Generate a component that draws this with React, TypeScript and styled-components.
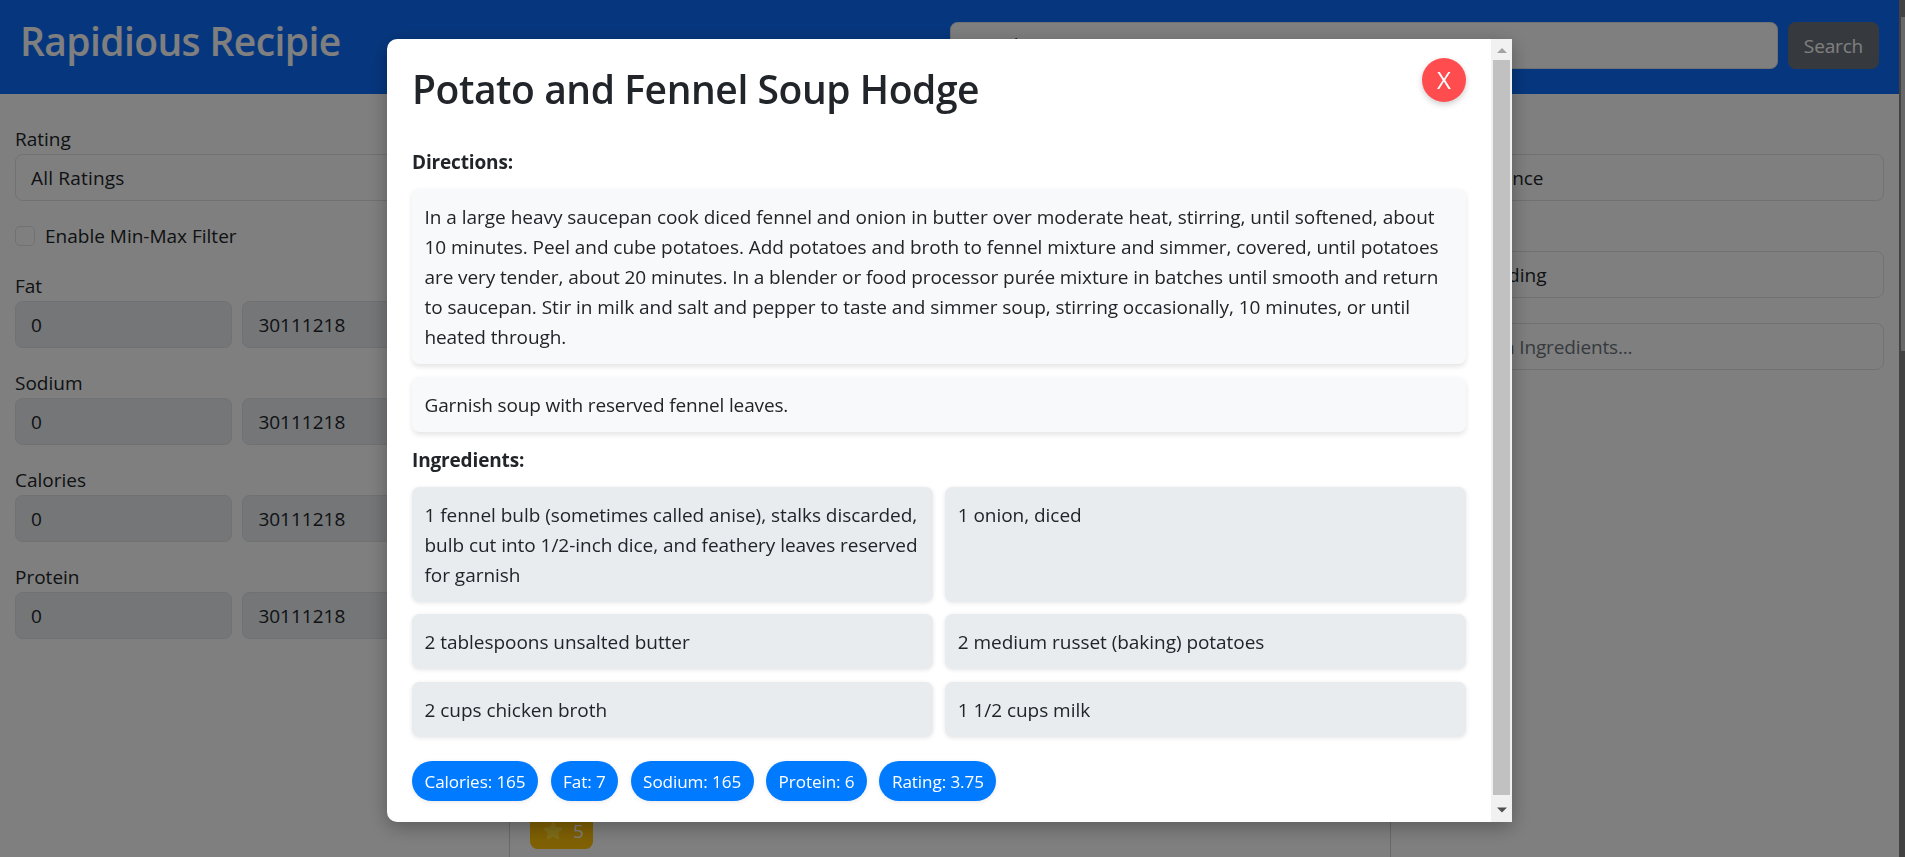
import React from "react";
import styled, { createGlobalStyle } from "styled-components";

const GlobalStyle = createGlobalStyle`
  *, *::before, *::after { box-sizing: border-box; }
  body {
    margin: 0;
    background: #fff;
    color: #212529;
    font-family: "Open Sans", "Noto Sans", sans-serif;
    font-size: 19px;
    line-height: 30px;
  }
  h1, h2, p { margin: 0; }
  input, select, button { font: inherit; color: inherit; }
`;

const Viewport = styled.div`
  display: flex;
  width: 100%;
  height: 857px;
  overflow: hidden;
`;

const Page = styled.div`
  display: flex;
  flex-direction: column;
  flex: 1;
  min-width: 0;
`;

const Header = styled.header`
  display: flex;
  align-items: flex-start;
  justify-content: space-between;
  height: 94px;
  flex: none;
  padding: 17px 20px 0;
  background: #0d6efd;
`;

const Brand = styled.h1`
  font-size: 39px;
  font-weight: 600;
  line-height: 48px;
  letter-spacing: -0.6px;
  color: #fff;
`;

const SearchForm = styled.form`
  display: flex;
  gap: 10px;
  margin-top: 5px;
`;

const Field = styled.div<{ $disabled?: boolean; $muted?: boolean; $tracking?: number }>`
  flex: 1;
  min-width: 0;
  height: 47px;
  padding: 8px 15px 7px;
  border: 1px solid #dee2e6;
  border-radius: 7.5px;
  background: ${(p) => (p.$disabled ? "#e9ecef" : "#fff")};
  color: ${(p) => (p.$muted ? "#6c757d" : "#212529")};
  letter-spacing: ${(p) => p.$tracking ?? (p.$disabled ? 0 : -0.15)}px;
  white-space: nowrap;
`;

const SearchField = styled(Field)`
  flex: none;
  width: 828px;
  padding-top: 7px;
`;

const SearchButton = styled.button`
  width: 91px;
  height: 47px;
  padding: 0;
  border: 0;
  border-radius: 7.5px;
  background: #6c757d;
  color: #fff;
  letter-spacing: -0.15px;
`;

const Columns = styled.div`
  display: grid;
  grid-template-columns: 1fr 2fr 1fr;
  flex: 1;
  min-height: 0;
  padding-top: 30px;
`;

const FilterColumn = styled.div`
  padding: 0 15px;
  min-width: 0;
`;

const FilterGroup = styled.div`
  margin-bottom: 20px;
`;

const Label = styled.div`
  height: 30px;
`;

const Pair = styled.div`
  display: flex;
  gap: 10px;
`;

const CheckRow = styled.label`
  display: flex;
  align-items: center;
  gap: 10px;
  height: 30px;
  margin-bottom: 20px;
`;

const CheckBox = styled.span`
  width: 20px;
  height: 20px;
  border: 1px solid #dee2e6;
  border-radius: 5px;
`;

const LooseField = styled(Field)`
  margin-top: 25px;
`;

const ResultCard = styled.article`
  display: flex;
  flex-direction: column;
  align-items: flex-start;
  height: 1000px;
  margin: 30px 33px 0 34px;
  padding: 658px 20px 0;
  border: 1px solid #d2d2d2;
  border-radius: 7.5px;
`;

const StarBadge = styled.span`
  display: flex;
  align-items: center;
  justify-content: space-between;
  width: 63px;
  height: 37px;
  margin-top: -1px;
  padding: 0 9px 0 12px;
  border-radius: 7.5px;
  background: #ffc107;
  color: #fff;
`;

const PageScroll = styled.div`
  width: 6px;
  padding: 17px 0 0 2px;
  background: #424242;
  position: relative;
  z-index: 3;
`;

const PageThumb = styled.div`
  height: 334px;
  background: #686868;
`;

const Overlay = styled.div`
  position: fixed;
  inset: 0;
  z-index: 2;
  display: flex;
  align-items: flex-start;
  padding: 39px 0 0 387px;
  background: rgba(0, 0, 0, 0.5);
`;

const Modal = styled.section`
  display: flex;
  width: 1125px;
  height: 783px;
  overflow: hidden;
  border-radius: 10px 0 0 10px;
  background: #fff;
  box-shadow: 0 5px 19px rgba(0, 0, 0, 0.3);
`;

const ModalBody = styled.div`
  flex: 1;
  min-width: 0;
  padding: 25px 25px 20px;
`;

const ModalHead = styled.div`
  display: flex;
  justify-content: space-between;
  align-items: flex-start;
  height: 82.5px;
`;

const ModalTitle = styled.h2`
  margin-top: 1px;
  font-size: 39px;
  font-weight: 600;
  line-height: 48px;
  letter-spacing: -0.43px;
`;

const CloseButton = styled.button`
  width: 44px;
  height: 44px;
  margin-top: -6px;
  padding: 0;
  border: 0;
  border-radius: 50%;
  background: #ff4d4f;
  color: #fff;
  font-size: 24px;
  line-height: 44px;
  box-shadow: 0 2.5px 6px rgba(0, 0, 0, 0.2);
`;

const SectionTitle = styled.div`
  height: 30px;
  margin-bottom: 12.5px;
  padding-top: 0.6px;
  font-weight: 700;
  letter-spacing: -0.15px;
`;

const Steps = styled.div`
  display: flex;
  flex-direction: column;
  gap: 12.5px;
  margin-bottom: 12.5px;
`;

const Step = styled.p`
  padding: 13px 12.5px 12px;
  border-radius: 7.5px;
  background: #f8f9fa;
  box-shadow: 0 2.5px 5px rgba(0, 0, 0, 0.1);
  white-space: nowrap;
`;

const Line = styled.span<{ $tracking: number }>`
  display: block;
  letter-spacing: ${(p) => p.$tracking}px;
`;

const Ingredients = styled.div`
  display: grid;
  grid-template-columns: 1fr 1fr;
  gap: 12.5px;
`;

const Ingredient = styled.div`
  padding: 13px 12.5px 12px;
  border-radius: 7.5px;
  background: #e9ecef;
  letter-spacing: -0.04px;
  box-shadow: 0 1px 4px rgba(0, 0, 0, 0.1);
`;

const Pills = styled.div`
  display: flex;
  gap: 12.5px;
  margin-top: 24.5px;
`;

const Pill = styled.span`
  height: 39.5px;
  padding: 6.5px 12.5px 6px;
  border-radius: 25px;
  background: #007bff;
  color: #fff;
  font-size: 17.1px;
  line-height: 27px;
  letter-spacing: -0.09px;
  white-space: nowrap;
  box-shadow: 0 1px 4px rgba(0, 0, 0, 0.1);
`;

const ScrollTrack = styled.div`
  display: flex;
  flex-direction: column;
  align-items: center;
  width: 21px;
  background: #f1f1f1;
`;

const ScrollArrow = styled.svg`
  display: block;
  width: 21px;
  height: 21px;
`;

const ScrollThumb = styled.div`
  width: 17px;
  height: 735px;
  background: #c1c1c1;
`;

const nutrients = ["Fat", "Sodium", "Calories", "Protein"];

const steps = [
  [
    { text: "In a large heavy saucepan cook diced fennel and onion in butter over moderate heat, stirring, until softened, about", tracking: -0.026 },
    { text: "10 minutes. Peel and cube potatoes. Add potatoes and broth to fennel mixture and simmer, covered, until potatoes", tracking: -0.056 },
    { text: "are very tender, about 20 minutes. In a blender or food processor purée mixture in batches until smooth and return", tracking: -0.096 },
    { text: "to saucepan. Stir in milk and salt and pepper to taste and simmer soup, stirring occasionally, 10 minutes, or until", tracking: -0.06 },
    { text: "heated through.", tracking: -0.1 },
  ],
  [{ text: "Garnish soup with reserved fennel leaves.", tracking: -0.14 }],
];

const ingredients = [
  "1 fennel bulb (sometimes called anise), stalks discarded, bulb cut into 1/2-inch dice, and feathery leaves reserved for garnish",
  "1 onion, diced",
  "2 tablespoons unsalted butter",
  "2 medium russet (baking) potatoes",
  "2 cups chicken broth",
  "1 1/2 cups milk",
];

const facts = ["Calories: 165", "Fat: 7", "Sodium: 165", "Protein: 6", "Rating: 3.75"];

export default function App() {
  return (
    <>
      <GlobalStyle />
      <Viewport>
        <Page>
          <Header>
            <Brand>Rapidious Recipie</Brand>
            <SearchForm>
              <SearchField>Search</SearchField>
              <SearchButton type="button">Search</SearchButton>
            </SearchForm>
          </Header>
          <Columns>
            <FilterColumn>
              <FilterGroup>
                <Label>Rating</Label>
                <Field $tracking={0.2}>All Ratings</Field>
              </FilterGroup>
              <CheckRow>
                <CheckBox />
                Enable Min-Max Filter
              </CheckRow>
              {nutrients.map((name) => (
                <FilterGroup key={name}>
                  <Label>{name}</Label>
                  <Pair>
                    <Field $disabled>0</Field>
                    <Field $disabled>30111218</Field>
                  </Pair>
                </FilterGroup>
              ))}
            </FilterColumn>
            <ResultCard>
              <StarBadge>
                <svg width="22" height="22" viewBox="0 0 24 24">
                  <path
                    d="M12 2.6l2.9 5.900 6.500.95-4.700 4.600 1.100 6.450L12 17.500l-5.800 3 1.100-6.450-4.700-4.600 6.500-.95z"
                    fill="#ffdb33"
                    stroke="#ffdb33"
                    strokeWidth="1.8"
                    strokeLinejoin="round"
                  />
                </svg>
                5
              </StarBadge>
            </ResultCard>
            <FilterColumn>
              <FilterGroup>
                <Label />
                <Field>Relevance</Field>
              </FilterGroup>
              <FilterGroup>
                <Label />
                <Field $tracking={0.05}>Ascending</Field>
              </FilterGroup>
              <LooseField $muted>Search Ingredients...</LooseField>
            </FilterColumn>
          </Columns>
        </Page>
        <PageScroll>
          <PageThumb />
        </PageScroll>
      </Viewport>

      <Overlay>
        <Modal>
          <ModalBody>
            <ModalHead>
              <ModalTitle>Potato and Fennel Soup Hodge</ModalTitle>
              <CloseButton>X</CloseButton>
            </ModalHead>
            <SectionTitle>Directions:</SectionTitle>
            <Steps>
              {steps.map((lines, i) => (
                <Step key={i}>
                  {lines.map((line) => (
                    <Line key={line.text} $tracking={line.tracking}>
                      {line.text}
                    </Line>
                  ))}
                </Step>
              ))}
            </Steps>
            <SectionTitle>Ingredients:</SectionTitle>
            <Ingredients>
              {ingredients.map((item) => (
                <Ingredient key={item}>{item}</Ingredient>
              ))}
            </Ingredients>
            <Pills>
              {facts.map((fact) => (
                <Pill key={fact}>{fact}</Pill>
              ))}
            </Pills>
          </ModalBody>
          <ScrollTrack>
            <ScrollArrow viewBox="0 0 21 21">
              <path d="M6 14h10l-5-5z" fill="#a3a3a3" />
            </ScrollArrow>
            <ScrollThumb />
            <ScrollArrow viewBox="0 0 21 21">
              <path d="M6 12.500h10l-5 5z" fill="#505050" />
            </ScrollArrow>
          </ScrollTrack>
        </Modal>
      </Overlay>
    </>
  );
}
